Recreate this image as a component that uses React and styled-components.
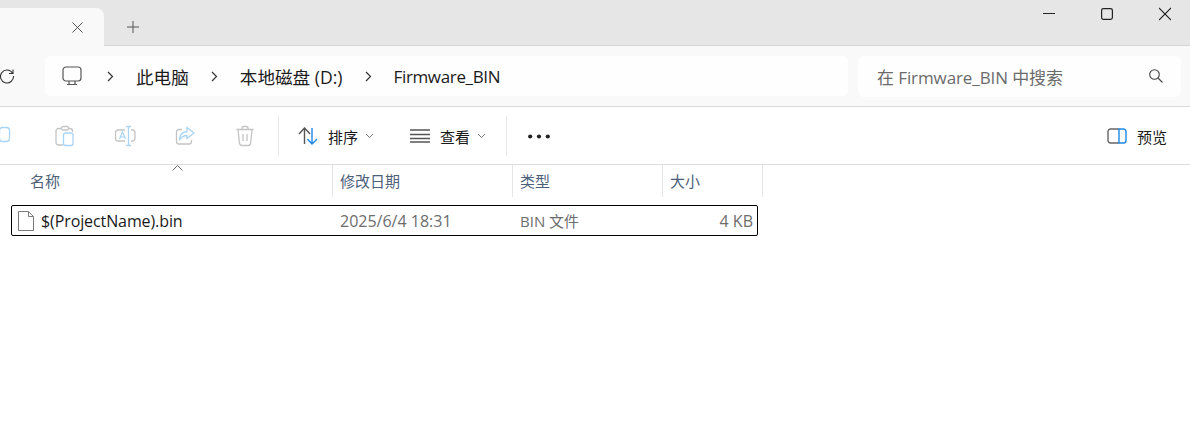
import React from "react";
import styled, { createGlobalStyle } from "styled-components";

const Global = createGlobalStyle`
  html, body { margin: 0; padding: 0; background: #fff; overflow: hidden; }
  body { font-family: "Open Sans", "Noto Sans CJK SC", sans-serif; color: #1a1a1a; }
  svg { display: block; flex: none; }
`;
const Window = styled.div`width: 1190px; height: 431px; overflow: hidden; background: #fff;`;
const TitleBar = styled.div`
  height: 45px; background: #e6e6e6; border-bottom: 1px solid #d6d6d6; display: flex; align-items: flex-end;
`;
const Tab = styled.div`
  width: 104px; height: 38px; margin-bottom: -1px; background: #f9f9f9; border-top-right-radius: 8px;
  display: flex; align-items: flex-start; justify-content: flex-end; padding: 14px 21px 0 0; box-sizing: border-box;
`;
const NewTab = styled.div`margin: 0 0 6px 23px; height: 24px; display: flex; align-items: center;`;
const WindowControls = styled.div`margin-left: auto; align-self: flex-start; display: flex; padding-top: 6px; padding-right: 19px; gap: 46px;`;
const AddressRow = styled.div`
  height: 60px; background: #f9f9f9; border-bottom: 1px solid #dcdcdc; display: flex; align-items: center; gap: 10px;
`;
const Refresh = styled.div`width: 35px; display: flex; justify-content: flex-start; margin-left: -1px; margin-right: 1px;`;
const Breadcrumbs = styled.div`
  width: 803px; height: 40px; background: #fefefe; border-radius: 6px; display: flex; align-items: center; padding-left: 17px; box-sizing: border-box;
`;
const Crumb = styled.span`font-size: ${p => p.$size}px; letter-spacing: ${p => p.$ls}px; color: #1a1a1a;`;
const Chevron = styled.span`margin: 0 ${p => p.$gap}px 0 ${p => p.$left}px;`;
const Search = styled.div`
  width: 323px; height: 41px; background: #fefefe; border-radius: 6px; display: flex; align-items: center; justify-content: space-between;
  padding: 0 18px 0 19px; box-sizing: border-box; font-size: 17px; letter-spacing: -0.1px; color: #6b6b6b;
`;
const Toolbar = styled.div`
  height: 58px; background: #fff; border-bottom: 1px solid #dcdcdc; display: flex; align-items: center; margin-left: -25px; padding: 1px 23px 0 0; box-sizing: border-box;
`;
const IconBtn = styled.div`width: 60px; display: flex; justify-content: center;`;
const Divider = styled.div`width: 1px; height: 40px; background: #e8e8e8; margin: 0 ${p => p.$right}px 0 ${p => p.$left}px;`;
const MenuBtn = styled.div`display: flex; align-items: center; font-size: 15px; color: #1a1a1a; margin-right: ${p => p.$right || 0}px;`;
const MenuLabel = styled.span`margin: 0 ${p => p.$end ?? 7}px 0 10px;`;
const Spacer = styled.div`flex: 1;`;
const HeaderRow = styled.div`display: flex; height: 32px;`;
const HeaderCell = styled.div`
  width: ${p => p.$w}px; box-sizing: border-box; height: 32px; border-right: 1px solid #e5e5e5; padding: 4px 0 0 ${p => p.$pl}px;
  font-size: 15px; color: #4c607a; position: relative; line-height: 24px;
`;
const SortCaret = styled.span`position: absolute; left: 172px; top: 0;`;
const FileRow = styled.div`
  margin: 8px 0 0 11px; width: 747px; height: 31px; box-sizing: border-box; border: 1px solid #000; border-radius: 2px;
  display: flex; align-items: center;
`;
const NameCell = styled.div`width: 328px; display: flex; align-items: center; padding-left: 6px; box-sizing: border-box; gap: 7px; color: #1a1a1a; font-size: 16px; letter-spacing: -0.1px;`;
const DataCell = styled.div`width: ${p => p.$w}px; color: #6d6d6d; font-size: ${p => p.$size}px; text-align: ${p => p.$right ? "right" : "left"};`;

const blue = "#a8d4f5", grey = "#c4c4c4";

const Copy = () => (
  <svg width="20" height="20" viewBox="0 0 20 20" fill="none">
    <path d="M5 4v12h-2a2 2 0 0 1-2-2" stroke={grey} strokeWidth="1.2" transform="translate(-3 0)" />
    <rect x="4.5" y="1.5" width="10" height="14" rx="3" stroke={blue} strokeWidth="1.3" />
  </svg>
);
const Paste = () => (
  <svg width="20" height="22" viewBox="0 0 20 22" fill="none">
    <path d="M7 3.5H3.5A2.5 2.5 0 0 0 1 6v11.5A2.5 2.5 0 0 0 3.500 20H8M13 3.500h2A2.500 2.500 0 0 1 17.500 6v1" stroke={grey} strokeWidth="1.3" />
    <rect x="6.500" y="1.500" width="7" height="3.500" rx="1.500" stroke={grey} strokeWidth="1.300" />
    <rect x="8.500" y="8" width="9.500" height="12.500" rx="2" stroke={blue} strokeWidth="1.300" />
  </svg>
);
const Rename = () => (
  <svg width="22" height="22" viewBox="0 0 22 22" fill="none">
    <path d="M11 5H4a2.500 2.500 0 0 0-2.500 2.500v6A2.500 2.500 0 0 0 4 16h7M17 5h1.500A2.500 2.500 0 0 1 21 7.500v6a2.500 2.500 0 0 1-2.500 2.500H17" stroke={grey} strokeWidth="1.300" />
    <path d="M5.500 14L8.500 7l3 7M6.500 12h4" stroke={blue} strokeWidth="1.200" />
    <path d="M12 1.500h5M14.500 1.500v19M12 20.500h5" stroke={blue} strokeWidth="1.300" />
  </svg>
);
const Share = () => (
  <svg width="20" height="20" viewBox="0 0 20 20" fill="none">
    <path d="M7 3.500H4A2.500 2.500 0 0 0 1.500 6v9.500A2.500 2.500 0 0 0 4 18h10a2.500 2.500 0 0 0 2.500-2.500V14" stroke={grey} strokeWidth="1.300" />
    <path d="M12 1.500l7 5.500-7 5.500V9.500C9 9.500 6.500 10.500 4.500 14c0-5 3-8 7.500-8.500z" stroke={blue} strokeWidth="1.300" strokeLinejoin="round" />
  </svg>
);
const Trash = () => (
  <svg width="20" height="22" viewBox="0 0 20 22" fill="none" stroke={grey} strokeWidth="1.300">
    <path d="M1.500 4.500h17M7 4.500V3a1.500 1.500 0 0 1 1.500-1.500h3A1.500 1.500 0 0 1 13 3v1.500" />
    <path d="M3 4.500l1.500 14A2.500 2.500 0 0 0 7 20.500h6a2.500 2.500 0 0 0 2.500-2l1.500-14" />
    <path d="M8 9v7M12 9v7" />
  </svg>
);
const Sort = () => (
  <svg width="20" height="18" viewBox="0 0 20 18" fill="none" strokeWidth="1.400">
    <path d="M1 7l5.500-6L12 7M6.500 1v16" stroke="#555" />
    <path d="M14 1v16M9.500 12l4.500 5 5-5" stroke="#1e88e5" />
  </svg>
);
const Lines = () => (
  <svg width="20" height="14" viewBox="0 0 20 14" stroke="#555" strokeWidth="1.300" fill="none">
    <path d="M0 1h20M0 5.500h20M0 9.500h20M0 13h20" />
  </svg>
);
const Caret = () => (
  <svg width="9" height="6" viewBox="0 0 9 6" fill="none" stroke="#777" strokeWidth="1">
    <path d="M1 1l3.500 3.500L8 1" />
  </svg>
);
const Dots = () => (
  <svg width="22" height="5" viewBox="0 0 22 5" fill="#222">
    <circle cx="2.200" cy="2.500" r="2.100" /><circle cx="11" cy="2.500" r="2.100" /><circle cx="19.800" cy="2.500" r="2.100" />
  </svg>
);
const Preview = () => (
  <svg width="20" height="16" viewBox="0 0 20 16" fill="none" strokeWidth="1.400">
    <path d="M12 1H3.500A2.500 2.500 0 0 0 1 3.500v9A2.500 2.500 0 0 0 3.500 15H12" stroke="#666" />
    <path d="M12 1h4.500A2.500 2.500 0 0 1 19 3.500v9a2.500 2.500 0 0 1-2.500 2.500H12z" stroke="#1e88e5" />
  </svg>
);
const Cross = ({ size, color }) => (
  <svg width={size} height={size} viewBox="0 0 12 12" stroke={color} strokeWidth="1" fill="none">
    <path d="M.5.500l11 11M11.500.500l-11 11" />
  </svg>
);
const Chev = () => (
  <svg width="7" height="11" viewBox="0 0 7 11" stroke="#333" strokeWidth="1.200" fill="none">
    <path d="M1 1l4.500 4.500L1 10" />
  </svg>
);

export default function App() {
  return (
    <Window>
      <Global />
      <TitleBar>
        <Tab><Cross size={11} color="#444" /></Tab>
        <NewTab>
          <svg width="12" height="12" viewBox="0 0 12 12" stroke="#555" strokeWidth="1" fill="none"><path d="M6 0v12M0 6h12" /></svg>
        </NewTab>
        <WindowControls>
          <svg width="12" height="16" viewBox="0 0 12 16" stroke="#222" strokeWidth="1" fill="none"><path d="M0 7.500h12" /></svg>
          <svg width="12" height="16" viewBox="0 0 12 16" stroke="#222" strokeWidth="1.200" fill="none"><rect x=".6" y="2.600" width="10.800" height="10.800" rx="1.800" /></svg>
          <svg width="12" height="16" viewBox="0 0 12 16" stroke="#222" strokeWidth="1.100" fill="none"><path d="M0 2l12 12M12 2L0 14" /></svg>
        </WindowControls>
      </TitleBar>
      <AddressRow>
        <Refresh>
          <svg width="16" height="16" viewBox="0 0 16 16" stroke="#333" strokeWidth="1.100" fill="none">
            <path d="M13.500 5A6.500 6.500 0 1 0 14.500 8M14 1.500V5.500H10" />
          </svg>
        </Refresh>
        <Breadcrumbs>
          <svg width="20" height="20" viewBox="0 0 20 20" fill="none" stroke="#555" strokeWidth="1.200">
            <rect x="1" y="1" width="18" height="14" rx="3" />
            <path d="M7 15v3M13 15v3M5 18.500h10" />
          </svg>
          <Chevron $left={25} $gap={22}><Chev /></Chevron>
          <Crumb $size={17.6} $ls={0}>此电脑</Crumb>
          <Chevron $left={22} $gap={22}><Chev /></Chevron>
          <Crumb $size={17.6} $ls={0}>本地磁盘 (D:)</Crumb>
          <Chevron $left={22} $gap={22}><Chev /></Chevron>
          <Crumb $size={17} $ls={-0.35}>Firmware_BIN</Crumb>
        </Breadcrumbs>
        <Search>
          <span>在 Firmware_BIN 中搜索</span>
          <svg width="14" height="14" viewBox="0 0 14 14" stroke="#444" strokeWidth="1.100" fill="none">
            <circle cx="5.500" cy="5.500" r="4.800" /><path d="M9 9l4.500 4.500" />
          </svg>
        </Search>
      </AddressRow>
      <Toolbar>
        <IconBtn><Copy /></IconBtn>
        <IconBtn><Paste /></IconBtn>
        <IconBtn><Rename /></IconBtn>
        <IconBtn><Share /></IconBtn>
        <IconBtn><Trash /></IconBtn>
        <Divider $left={3} $right={19} />
        <MenuBtn $right={36}><Sort /><MenuLabel>排序</MenuLabel><Caret /></MenuBtn>
        <MenuBtn><Lines /><MenuLabel>查看</MenuLabel><Caret /></MenuBtn>
        <Divider $left={20} $right={21} />
        <Dots />
        <Spacer />
        <MenuBtn><Preview /><MenuLabel $end={0}>预览</MenuLabel></MenuBtn>
      </Toolbar>
      <HeaderRow>
        <HeaderCell $w={333} $pl={30}>名称<SortCaret><svg width="11" height="6" viewBox="0 0 11 6" stroke="#666" fill="none"><path d="M.500 5.500l5-5 5 5" /></svg></SortCaret></HeaderCell>
        <HeaderCell $w={180} $pl={7}>修改日期</HeaderCell>
        <HeaderCell $w={150} $pl={7}>类型</HeaderCell>
        <HeaderCell $w={100} $pl={7}>大小</HeaderCell>
      </HeaderRow>
      <FileRow>
        <NameCell>
          <svg width="16" height="20" viewBox="0 0 16 20" fill="#fff" stroke="#7a7a7a" strokeWidth="1">
            <path d="M.500.500h10l5 5v14H.500z" /><path d="M10.500.500v5h5" fill="none" />
          </svg>
          <span>$(ProjectName).bin</span>
        </NameCell>
        <DataCell $w={180} $size={16}>2025/6/4 18:31</DataCell>
        <DataCell $w={150} $size={15}>BIN 文件</DataCell>
        <DataCell $w={83} $size={16} $right>4 KB</DataCell>
      </FileRow>
    </Window>
  );
}
